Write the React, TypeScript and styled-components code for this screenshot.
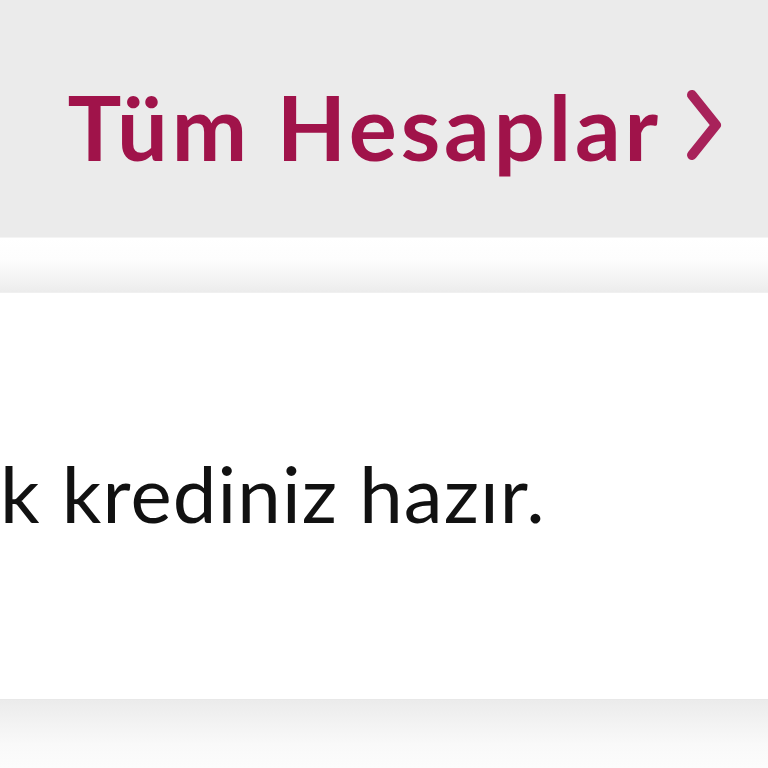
import React from 'react'
import styled, { createGlobalStyle } from 'styled-components'

const GlobalStyle = createGlobalStyle`
  html, body {
    margin: 0;
    padding: 0;
    background: #fbfbfb;
    overflow: hidden;
  }
  body {
    font-family: Lato, "Noto Sans", sans-serif;
  }
`

const Page = styled.div`
  width: 768px;
  height: 768px;
  display: flex;
  flex-direction: column;
  overflow: hidden;
`

const Header = styled.div`
  height: 237px;
  flex-shrink: 0;
  background: #ebebeb;
  display: flex;
  align-items: center;
  justify-content: flex-end;
  padding-right: 44px;
  box-sizing: border-box;
`

const AllAccounts = styled.a`
  display: flex;
  align-items: center;
  gap: 22px;
  color: #a0134a;
  font-weight: 700;
  font-size: 90px;
  letter-spacing: 3.9px;
  text-decoration: none;
  line-height: 1;
  margin-top: 14px;
`

const Chevron = styled.svg`
  width: 40px;
  height: 76px;
  margin-top: -2px;
`

const Divider = styled.div`
  height: 54px;
  flex-shrink: 0;
  background: linear-gradient(to bottom, #ffffff 0%, #fdfdfd 40%, #f2f2f2 80%, #ececec 100%);
  border-top: 1px solid #f4f4f4;
  border-bottom: 1px solid #f0f0f0;
`

const Card = styled.div`
  height: 406px;
  flex-shrink: 0;
  background: #ffffff;
  display: flex;
  align-items: center;
  overflow: hidden;
`

const Message = styled.p`
  margin: 0;
  margin-top: -6px;
  font-size: 78px;
  letter-spacing: 1.1px;
  color: #111;
  white-space: nowrap;
  line-height: 1;
`

const Footer = styled.div`
  flex: 1;
  background: linear-gradient(to bottom, #ebebeb 0%, #f3f3f3 35%, #f9f9f9 65%, #fcfcfc 100%);
  border-top: 1px solid #e8e8e8;
`

export default function App() {
  return (
    <>
      <GlobalStyle />
      <Page>
        <Header>
          <AllAccounts href="#">
            Tüm Hesaplar
            <Chevron viewBox="0 0 40 76">
              <path d="M8 8 L32 38 L8 68" fill="none" stroke="#a8225a" strokeWidth="10" strokeLinecap="round" strokeLinejoin="round" />
            </Chevron>
          </AllAccounts>
        </Header>
        <Divider />
        <Card>
          <Message>k krediniz hazır.</Message>
        </Card>
        <Footer />
      </Page>
    </>
  )
}
